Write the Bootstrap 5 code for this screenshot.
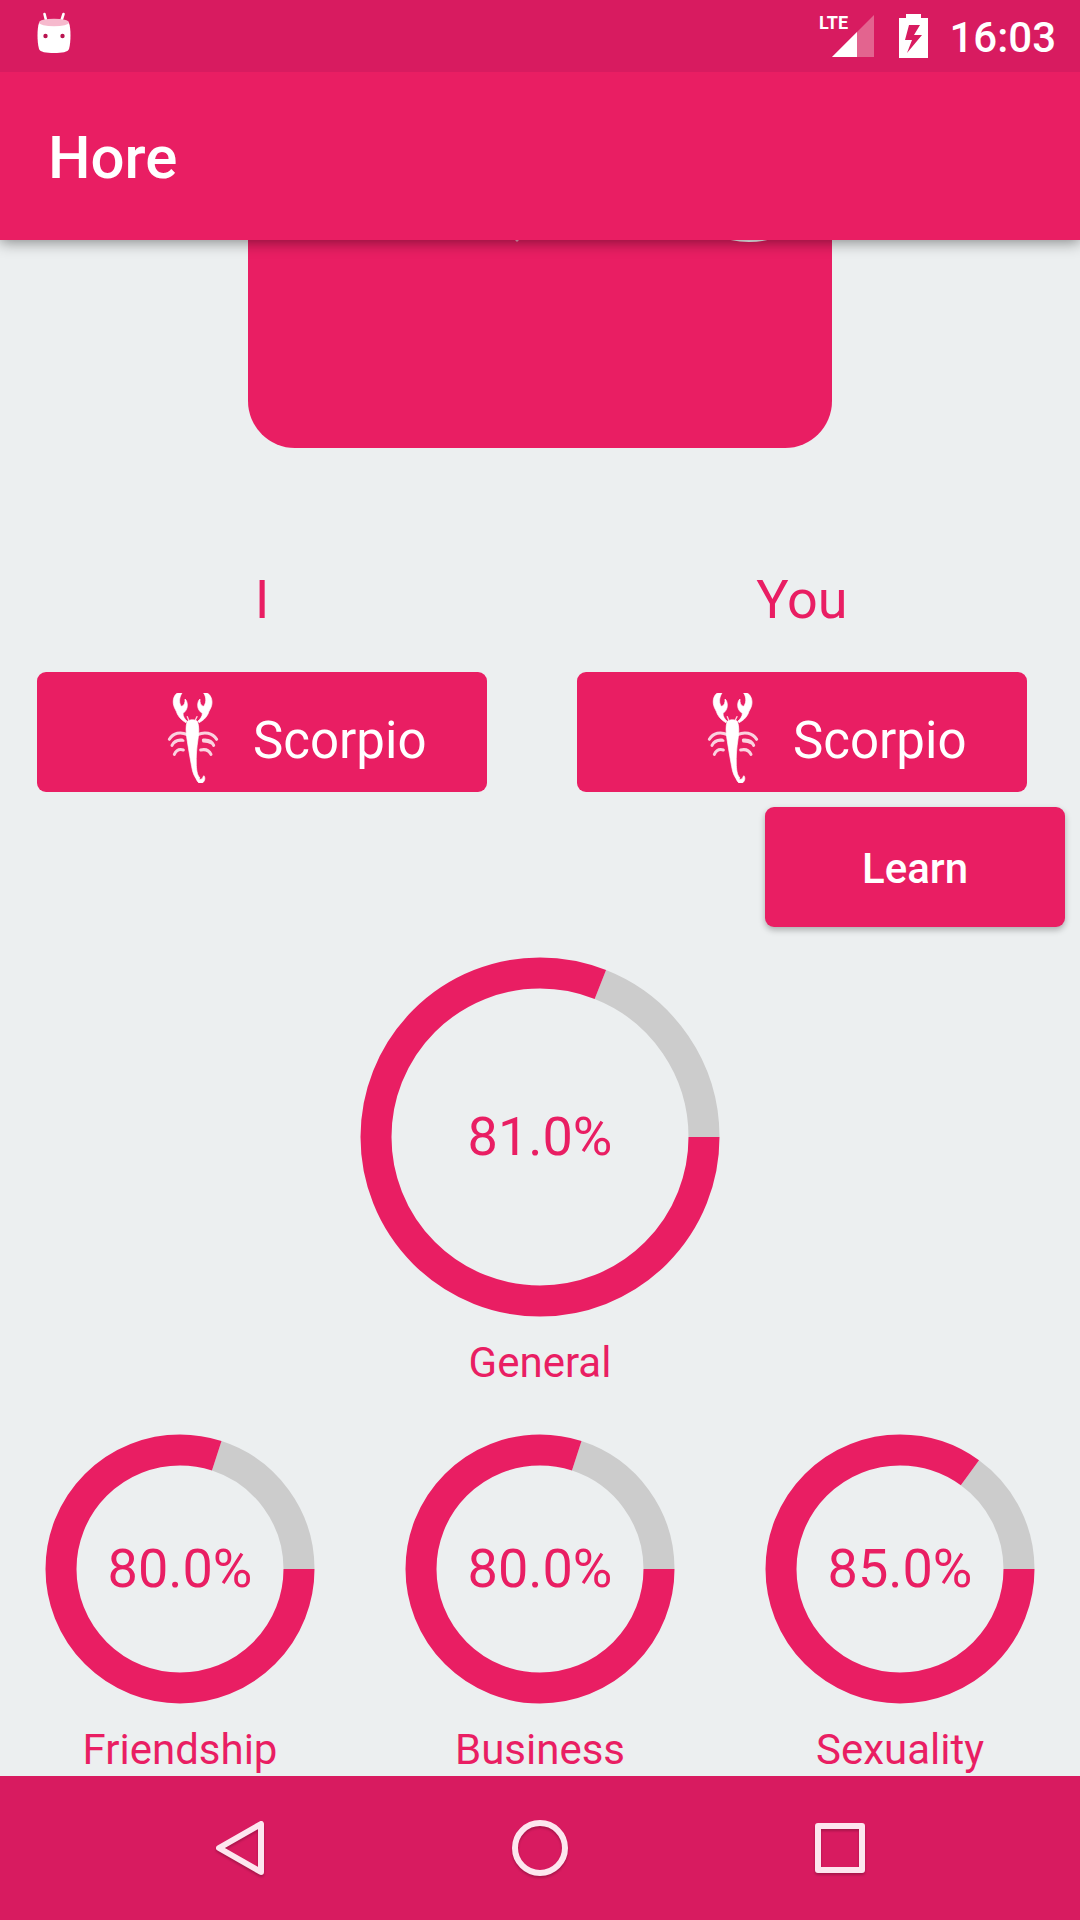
<!DOCTYPE html>
<html lang="en">
<head>
<meta charset="utf-8">
<meta name="viewport" content="width=device-width, initial-scale=1">
<title>Hore</title>
<link href="https://cdn.jsdelivr.net/npm/bootstrap@5.3.0/dist/css/bootstrap.min.css" rel="stylesheet">
<style>
  :root { --pink: #e91e63; --pink-dark: #d81b60; }
  body { font-family: Roboto, "Liberation Sans", sans-serif; background: #eceff0; color: var(--pink); }
  svg { display: block; flex: none; }
  .status-bar { height: 72px; background: var(--pink-dark); color: #fff; padding: 0 24px 0 36px; }
  .status-icons { gap: 20px; }
  .clock { font-size: 42px; line-height: 48px; font-weight: 500; padding-top: 4px; }
  .net-label { font-family: Roboto, "Liberation Sans", sans-serif; font-weight: 700; font-size: 18px; fill: #fff; }
  .app-bar { height: 168px; background: var(--pink); padding: 4px 48px 0; box-shadow: 0 2px 14px rgba(0,0,0,.45); }
  .app-title { font-size: 60px; line-height: 72px; font-weight: 500; color: #fff; margin: 0; }
  .banner { width: 584px; height: 208px; margin-bottom: 120px; background: var(--pink); border-radius: 0 0 47px 47px; overflow: hidden; }
  .sign-col { padding: 0 53px 0 37px; }
  .sign-label { font-size: 54px; line-height: 64px; margin-bottom: 40px; text-align: center; }
  .btn-pink, .btn-pink:hover, .btn-pink:active { background: var(--pink); color: #fff; border: 0; border-radius: 9px; height: 120px; }
  .btn-sign { font-size: 51px; line-height: 84px; padding: 21px 0 9px 111px; gap: 15px; }
  .btn-learn { width: 300px; font-size: 42px; line-height: 48px; font-weight: 500; padding: 10px 0 6px; margin: 15px 15px 30px 0; box-shadow: 0 3px 6px rgba(0,0,0,.28); }
  .gauge { display: grid; place-items: center; margin: 0 auto 22px; }
  .gauge > * { grid-area: 1 / 1; }
  .gauge circle { fill: none; stroke-width: 31; }
  .track { stroke: #ccc; }
  .meter-arc { stroke: var(--pink); }
  .gauge-value { font-size: 54px; line-height: 64px; }
  .gauge-row { padding-top: 47px; }
  figcaption { font-size: 42px; line-height: 48px; text-align: center; }
  .nav-keys { height: 144px; background: var(--pink-dark); }
  .nav-key { width: 300px; height: 144px; border: 0; background: none; padding: 0; }
  .nav-key svg { fill: none; stroke: #fde6ef; stroke-width: 6; stroke-linejoin: round; filter: drop-shadow(0 2px 1px rgba(0,0,0,.22)); }
</style>
<script src="https://cdn.jsdelivr.net/npm/bootstrap@5.3.0/dist/js/bootstrap.bundle.min.js"></script>
</head>
<body>
<div class="d-flex flex-column min-vh-100">
  <header class="position-relative z-1">
    <div class="status-bar position-relative z-1 d-flex align-items-center justify-content-between">
      <svg width="36" height="72" viewBox="0 0 36 72" aria-hidden="true">
        <path d="M8.500 14 10.500 22M27.500 14 25 22" stroke="#fff" stroke-width="2.600" stroke-linecap="round"/>
        <path d="M3 23C1 28 1 42 3 49c1 3 7 4 15 4s14-1 15-4c2-7 2-21 0-26z" fill="#fff"/>
        <ellipse cx="18" cy="22.500" rx="15" ry="3.800" fill="#f6b9cd"/>
        <circle cx="9.500" cy="36" r="2.200" fill="#b91450"/><circle cx="26.500" cy="36" r="2.200" fill="#b91450"/>
      </svg>
      <div class="status-icons d-flex align-items-center">
        <svg width="60" height="72" viewBox="819 0 60 72" role="img" aria-label="LTE signal">
          <path d="M874 15v42h-42z" fill="#e3648f"/>
          <path d="M857 32v25h-25z" fill="#fff"/>
          <text class="net-label" x="819" y="29">LTE</text>
        </svg>
        <svg width="30" height="72" viewBox="899 0 30 72" role="img" aria-label="Battery charging">
          <path fill="#fff" fill-rule="evenodd" d="M906 14h15v4h7v40h-29V18h7zM909 25l-4 15h7l-5 13 15-18h-8l6-10z"/>
        </svg>
        <span class="clock">16:03</span>
      </div>
    </div>
    <div class="app-bar d-flex align-items-center">
      <h1 class="app-title">Hore</h1>
    </div>
  </header>

  <main class="flex-grow-1 overflow-hidden">
    <div class="banner mx-auto">
      <svg width="584" height="10" viewBox="0 0 584 10" aria-hidden="true">
        <path d="M472-3Q501 7 530-3z" fill="#fff"/><path d="M267 0h4l-2 2z" fill="#f7a5c1"/>
      </svg>
    </div>

    <div class="row g-0">
      <div class="col-6 sign-col">
        <div class="sign-label" id="me">I</div>
        <button class="btn btn-pink btn-sign d-flex align-items-end w-100" type="button" aria-describedby="me">
          <svg width="90" height="90" viewBox="-6 39 270 270" aria-hidden="true"><use href="#scorpion"/></svg>
          <span>Scorpio</span>
        </button>
      </div>
      <div class="col-6 sign-col">
        <div class="sign-label" id="partner">You</div>
        <button class="btn btn-pink btn-sign d-flex align-items-end w-100" type="button" aria-describedby="partner">
          <svg width="90" height="90" viewBox="-6 39 270 270" aria-hidden="true">
            <defs><filter id="soften" x="-10%" y="-10%" width="120%" height="120%"><feGaussianBlur stdDeviation="2"/></filter></defs>
            <g id="scorpion" fill="#fff" stroke="#fff" stroke-width="2" filter="url(#soften)">
              <path d="M88 37C72 41 67 60 71 76c2 9 8 16 11 26 6 12 15 20 26 26l3-5c-8-7-12-14-12-23 8-5 13-14 13-24 0-9-3-16-7-19 1 10-2 20-10 22-8-6-9-25 1-40z"/>
              <path d="M166 37c16 4 23 23 19 39-2 9-8 16-11 26-6 12-15 20-27 26l-3-5c8-7 13-14 13-23-9-5-14-14-14-24 0-9 3-16 7-19-1 10 2 20 10 22 8-6 11-25 1-40z"/>
              <path d="M112 124c8-6 22-6 30 0 6 14 5 36 2 54-4 25-6 50-5 78 1 20 4 31 11 38l-7 6c-10-8-15-22-18-40-5-28-10-54-14-82-3-19-5-40 1-54z"/>
              <path d="M141 287c2 9 9 14 15 9 3-3 3-8 6-9 5 8 2 17-5 22h-10c-6-5-9-12-10-18z"/>
              <g fill="none" stroke-width="9" stroke-linecap="round" opacity=".8">
                <path d="M112 164C92 154 70 158 58 178M96 180c-16-2-24 4-30 16M100 210c-14-4-22 2-27 13"/>
                <path d="M143 164c20-10 44-6 57 14M160 180c18-2 26 4 31 16M152 210c18-4 26 2 31 13"/>
                <path d="M72 188c10-6 18-8 28-6M160 184c10 0 18 2 24 6" stroke-width="7"/>
                <path d="M116 120l-4-10M136 120l5-10" stroke-width="4"/>
              </g>
            </g>
          </svg>
          <span>Scorpio</span>
        </button>
      </div>
    </div>

    <div class="d-flex justify-content-end">
      <button class="btn btn-pink btn-learn" type="button">Learn</button>
    </div>

    <figure class="mb-0">
      <div class="gauge">
        <svg width="360" height="360" viewBox="-180 -180 360 360" aria-hidden="true">
          <circle class="track" r="164" pathLength="100" stroke-dasharray="19 81" stroke-dashoffset="-81"/>
          <circle class="meter-arc" r="164" pathLength="100" stroke-dasharray="81 19"/>
        </svg>
        <span class="gauge-value">81.0%</span>
      </div>
      <figcaption>General</figcaption>
    </figure>

    <div class="row g-0 gauge-row">
      <figure class="col-4 mb-0">
        <div class="gauge">
          <svg width="270" height="270" viewBox="-135 -135 270 270" aria-hidden="true">
            <circle class="track" r="119" pathLength="100" stroke-dasharray="20 80" stroke-dashoffset="-80"/>
            <circle class="meter-arc" r="119" pathLength="100" stroke-dasharray="80 20"/>
          </svg>
          <span class="gauge-value">80.0%</span>
        </div>
        <figcaption>Friendship</figcaption>
      </figure>
      <figure class="col-4 mb-0">
        <div class="gauge">
          <svg width="270" height="270" viewBox="-135 -135 270 270" aria-hidden="true">
            <circle class="track" r="119" pathLength="100" stroke-dasharray="20 80" stroke-dashoffset="-80"/>
            <circle class="meter-arc" r="119" pathLength="100" stroke-dasharray="80 20"/>
          </svg>
          <span class="gauge-value">80.0%</span>
        </div>
        <figcaption>Business</figcaption>
      </figure>
      <figure class="col-4 mb-0">
        <div class="gauge">
          <svg width="270" height="270" viewBox="-135 -135 270 270" aria-hidden="true">
            <circle class="track" r="119" pathLength="100" stroke-dasharray="15 85" stroke-dashoffset="-85"/>
            <circle class="meter-arc" r="119" pathLength="100" stroke-dasharray="85 15"/>
          </svg>
          <span class="gauge-value">85.0%</span>
        </div>
        <figcaption>Sexuality</figcaption>
      </figure>
    </div>
  </main>

  <nav class="nav-keys d-flex justify-content-center" aria-label="System">
    <button class="nav-key" type="button" aria-label="Back">
      <svg class="mx-auto" width="60" height="60" viewBox="-30 -30 60 60"><path d="M21-24v48L-21 0z"/></svg>
    </button>
    <button class="nav-key" type="button" aria-label="Home">
      <svg class="mx-auto" width="60" height="60" viewBox="-30 -30 60 60"><circle r="25"/></svg>
    </button>
    <button class="nav-key" type="button" aria-label="Overview">
      <svg class="mx-auto" width="60" height="60" viewBox="-30 -30 60 60"><path d="M-22-22h44v44h-44z"/></svg>
    </button>
  </nav>
</div>
</body>
</html>
